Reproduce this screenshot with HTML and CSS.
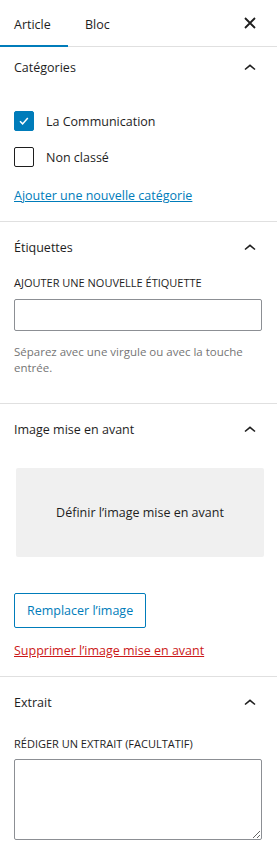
FILE: index.html
```html
<!DOCTYPE html>
<html lang="fr">
  <head>
    <meta charset="UTF-8" />
    <meta name="viewport" content="width=device-width, initial-scale=1.0" />
    <title>Réglages</title>
    <link rel="stylesheet" href="styles.css">
  </head>
  <body>
    <div class="sidebar">
      <div class="tabs">
        <button class="tab active">Article</button>
        <button class="tab">Bloc</button>
        <button class="close-btn" aria-label="Fermer">
          <svg width="12" height="12" viewBox="0 0 12 12"><path d="M1 1l10 10M11 1L1 11" stroke="#1e1e1e" stroke-width="1.8"/></svg>
        </button>
      </div>

      <div class="panel">
        <div class="panel-head first">
          <span>Catégories</span>
          <svg class="chevron" width="12" height="8" viewBox="0 0 12 8"><path d="M1 6.5l5-4.2 5 4.2" stroke="#1e1e1e" stroke-width="1.6" fill="none"/></svg>
        </div>
        <div class="panel-body cats">
          <label class="check-row">
            <span class="checkbox checked">
              <svg width="20" height="20" viewBox="0 0 20 20"><path d="M6 10.3l2.6 2.6 5.2-6" stroke="#fff" stroke-width="1.5" fill="none"/></svg>
            </span>
            La Communication
          </label>
          <label class="check-row">
            <span class="checkbox"></span>
            Non classé
          </label>
          <a class="link" href="#">Ajouter une nouvelle catégorie</a>
        </div>
      </div>

      <div class="panel">
        <div class="panel-head">
          <span>Étiquettes</span>
          <svg class="chevron" width="12" height="8" viewBox="0 0 12 8"><path d="M1 6.5l5-4.2 5 4.2" stroke="#1e1e1e" stroke-width="1.6" fill="none"/></svg>
        </div>
        <div class="panel-body tags">
          <div class="field-label">Ajouter une nouvelle étiquette</div>
          <input class="text-input" type="text" />
          <p class="help">Séparez avec une virgule ou avec la touche entrée.</p>
        </div>
      </div>

      <div class="panel">
        <div class="panel-head">
          <span>Image mise en avant</span>
          <svg class="chevron" width="12" height="8" viewBox="0 0 12 8"><path d="M1 6.5l5-4.2 5 4.2" stroke="#1e1e1e" stroke-width="1.6" fill="none"/></svg>
        </div>
        <div class="panel-body image-body">
          <div class="image-box">Définir l’image mise en avant</div>
          <button class="outline-btn">Remplacer l’image</button>
          <a class="link danger" href="#">Supprimer l’image mise en avant</a>
        </div>
      </div>

      <div class="panel last">
        <div class="panel-head">
          <span>Extrait</span>
          <svg class="chevron" width="12" height="8" viewBox="0 0 12 8"><path d="M1 6.5l5-4.2 5 4.2" stroke="#1e1e1e" stroke-width="1.6" fill="none"/></svg>
        </div>
        <div class="panel-body excerpt">
          <div class="field-label">Rédiger un extrait (facultatif)</div>
          <textarea class="text-area"></textarea>
        </div>
      </div>
    </div>
  </body>
</html>
```

FILE: styles.css
```css
body {
  font-family: "Open Sans", "Noto Sans", sans-serif;
  margin: 0;
  background-color: #fff;
  color: #1e1e1e;
  font-size: 12.5px;
}
.sidebar {
  width: 277px;
}
.tabs {
  display: flex;
  align-items: center;
  height: 46px;
  border-bottom: 1px solid #e0e0e0;
}
.tab {
  background: none;
  border: none;
  font-family: inherit;
  font-size: 12.5px;
  color: #1e1e1e;
  height: 47px;
  padding: 2px 14px 0;
  cursor: pointer;
  box-sizing: border-box;
  border-top: 2px solid transparent;
  border-bottom: 2px solid transparent;
  margin-bottom: -1px;
}
.tab.active {
  width: 68px;
  text-align: left;
  border-bottom-color: #007cba;
}
.tab + .tab {
  margin-left: 3px;
}
.close-btn {
  margin-left: auto;
  margin-right: 21px;
  width: 12px;
  height: 12px;
  padding: 0;
  border: none;
  background: none;
  display: flex;
}
.panel {
  border-bottom: 1px solid #e0e0e0;
}
.panel.last {
  border-bottom: none;
}
.panel-head {
  display: flex;
  align-items: center;
  justify-content: space-between;
  height: 50px;
  padding: 0 21px 0 14px;
  font-size: 12.5px;
  font-weight: 500;
}
.panel-head.first {
  height: 40px;
}
.chevron {
  margin-top: -1px;
}
.panel-body {
  padding: 0 15px 0 14px;
}
.cats {
  padding-top: 24px;
  padding-bottom: 16px;
}
.check-row {
  display: flex;
  align-items: center;
  gap: 12px;
  height: 20px;
  margin-bottom: 16px;
}
.check-row + .link {
  margin-top: 4px;
}
.checkbox {
  width: 20px;
  height: 20px;
  box-sizing: border-box;
  border: 1px solid #1e1e1e;
  border-radius: 2px;
  display: flex;
}
.checkbox.checked {
  background-color: #007cba;
  border-color: #007cba;
}
.checkbox.checked svg {
  margin: -1px;
}
.link {
  display: inline-block;
  color: #007cba;
  text-decoration: underline;
  line-height: 18px;
}
.field-label {
  text-transform: uppercase;
  font-size: 11px;
  font-weight: 500;
  line-height: 16px;
}
.tags {
  padding-top: 3px;
  padding-bottom: 27px;
}
.tags .field-label {
  margin-bottom: 8px;
}
.text-input {
  display: block;
  width: 100%;
  height: 32px;
  box-sizing: border-box;
  border: 1px solid #8c8f94;
  border-radius: 2px;
  margin: 0;
}
.help {
  margin: 13px 0 0;
  font-size: 11.5px;
  line-height: 16px;
  color: #757575;
}
.image-body {
  padding-top: 14px;
  padding-bottom: 16px;
}
.image-box {
  margin: 0 -2px 0 2px;
  height: 89px;
  background-color: #f0f0f0;
  border-radius: 2px;
  display: flex;
  align-items: center;
  justify-content: center;
}
.outline-btn {
  display: block;
  margin-top: 36px;
  height: 35px;
  padding: 0 12px;
  background: #fff;
  border: 1px solid #007cba;
  border-radius: 2px;
  color: #007cba;
  font-family: inherit;
  font-size: 12.5px;
}
.link.danger {
  color: #cc1818;
  margin-top: 14px;
}
.excerpt {
  padding-top: 9px;
  padding-bottom: 19px;
}
.excerpt .field-label {
  margin-bottom: 7px;
}
.text-area {
  display: block;
  width: 100%;
  height: 81px;
  box-sizing: border-box;
  border: 1px solid #8c8f94;
  border-radius: 2px;
  margin: 0;
  resize: vertical;
}
```
